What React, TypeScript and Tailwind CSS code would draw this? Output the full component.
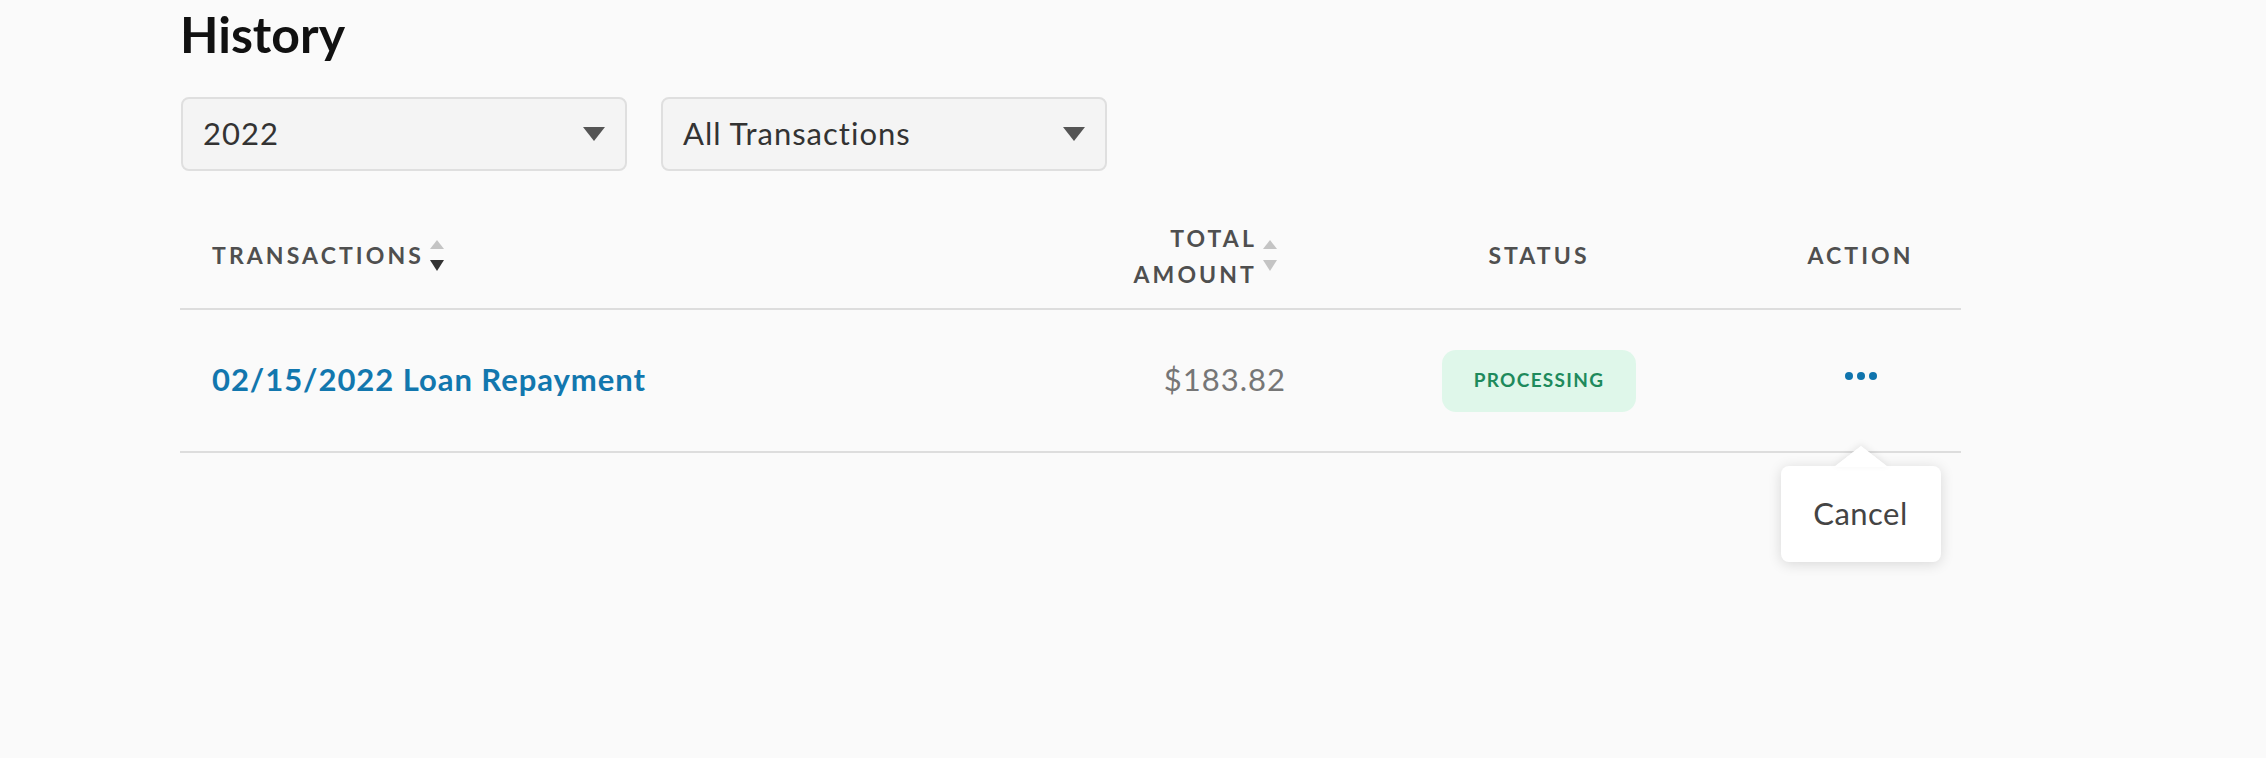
import React from "react";

const font = { fontFamily: "Lato, 'Noto Sans', sans-serif" };

function Caret() {
  return (
    <svg width="22" height="14" viewBox="0 0 22 14" className="shrink-0">
      <path d="M0 0 L22 0 L11 14 Z" fill="#555555" />
    </svg>
  );
}

function SortArrows({ down }: { down: string }) {
  return (
    <div className="flex flex-col gap-[11px] ml-[6px]">
      <svg width="14" height="9" viewBox="0 0 14 9">
        <path d="M0 9 L14 9 L7 0 Z" fill="#c4c4c4" />
      </svg>
      <svg width="14" height="11" viewBox="0 0 14 11">
        <path d="M0 0 L14 0 L7 11 Z" fill={down} />
      </svg>
    </div>
  );
}

function Select({ label }: { label: string }) {
  return (
    <div className="w-[446px] h-[74px] rounded-[8px] border-2 border-[#dfdfdf] bg-[#f4f4f4] flex items-center justify-between pl-[20px] pr-[20px]">
      <span className="text-[31px] tracking-[1px] text-[#333333] -translate-y-[1px]">{label}</span>
      <Caret />
    </div>
  );
}

export default function App() {
  return (
    <div className="w-[2266px] h-[758px] bg-[#fafafa] overflow-hidden" style={font}>
      <div className="pl-[180px] w-[1961px]">
        <h1 className="pt-[4px] h-[64px] leading-[60px] text-[50px] font-bold text-[#111111]">History</h1>
        <div className="mt-[33px] flex gap-[34px] pl-[1px]">
          <Select label="2022" />
          <Select label="All Transactions" />
        </div>

        <div className="mt-[30px] grid grid-cols-[920px_218px_442px_201px] h-[109px] pt-[2px] border-b-2 border-[#dddddd] items-center text-[23px] font-bold tracking-[3.1px] text-[#4f4f4f]">
          <div className="pl-[32px] flex items-center">
            <span>TRANSACTIONS</span>
            <SortArrows down="#333333" />
          </div>
          <div className="flex items-center justify-end pr-[41px]">
            <span className="text-right leading-[36px]">
              TOTAL
              <br />
              AMOUNT
            </span>
            <SortArrows down="#c4c4c4" />
          </div>
          <div className="text-center">STATUS</div>
          <div className="text-center">ACTION</div>
        </div>

        <div className="grid grid-cols-[920px_218px_442px_201px] h-[143px] border-b-2 border-[#dddddd] items-center">
          <div className="pl-[32px] text-[31px] tracking-[0.95px] font-bold text-[#1277ae] -translate-y-[1px]">02/15/2022 Loan Repayment</div>
          <div className="text-right pr-[32px] text-[31px] tracking-[1px] text-[#767676] -translate-y-[1px]">$183.82</div>
          <div className="flex justify-center">
            <div className="w-[194px] h-[62px] rounded-[14px] bg-[#dff7ea] flex items-center justify-center text-[19px] tracking-[1.3px] font-bold text-[#1e8a5c]">
              PROCESSING
            </div>
          </div>
          <div className="relative flex justify-center">
            <div className="flex gap-[4px] mb-[10px]">
              <span className="w-[8px] h-[8px] rounded-full bg-[#0f74ad]" />
              <span className="w-[8px] h-[8px] rounded-full bg-[#0f74ad]" />
              <span className="w-[8px] h-[8px] rounded-full bg-[#0f74ad]" />
            </div>
            <div className="absolute left-1/2 top-[94px] -translate-x-1/2 w-[160px] h-[96px] z-10">
              <svg width="54" height="21" viewBox="0 0 54 21" className="absolute left-[53px] -top-[20px] drop-shadow-[0_-2px_3px_rgba(0,0,0,0.08)]">
                <path d="M0 21 L27 0 L54 21 Z" fill="#ffffff" />
              </svg>
              <div className="w-full h-full rounded-[8px] bg-white shadow-[0_2px_14px_rgba(0,0,0,0.14)] flex items-center justify-center text-[31px] tracking-[0.5px] text-[#444444]">
                Cancel
              </div>
              <svg width="54" height="21" viewBox="0 0 54 21" className="absolute left-[53px] -top-[20px]">
                <path d="M0 21 L27 0 L54 21 Z" fill="#ffffff" />
              </svg>
            </div>
          </div>
        </div>
      </div>
    </div>
  );
}
